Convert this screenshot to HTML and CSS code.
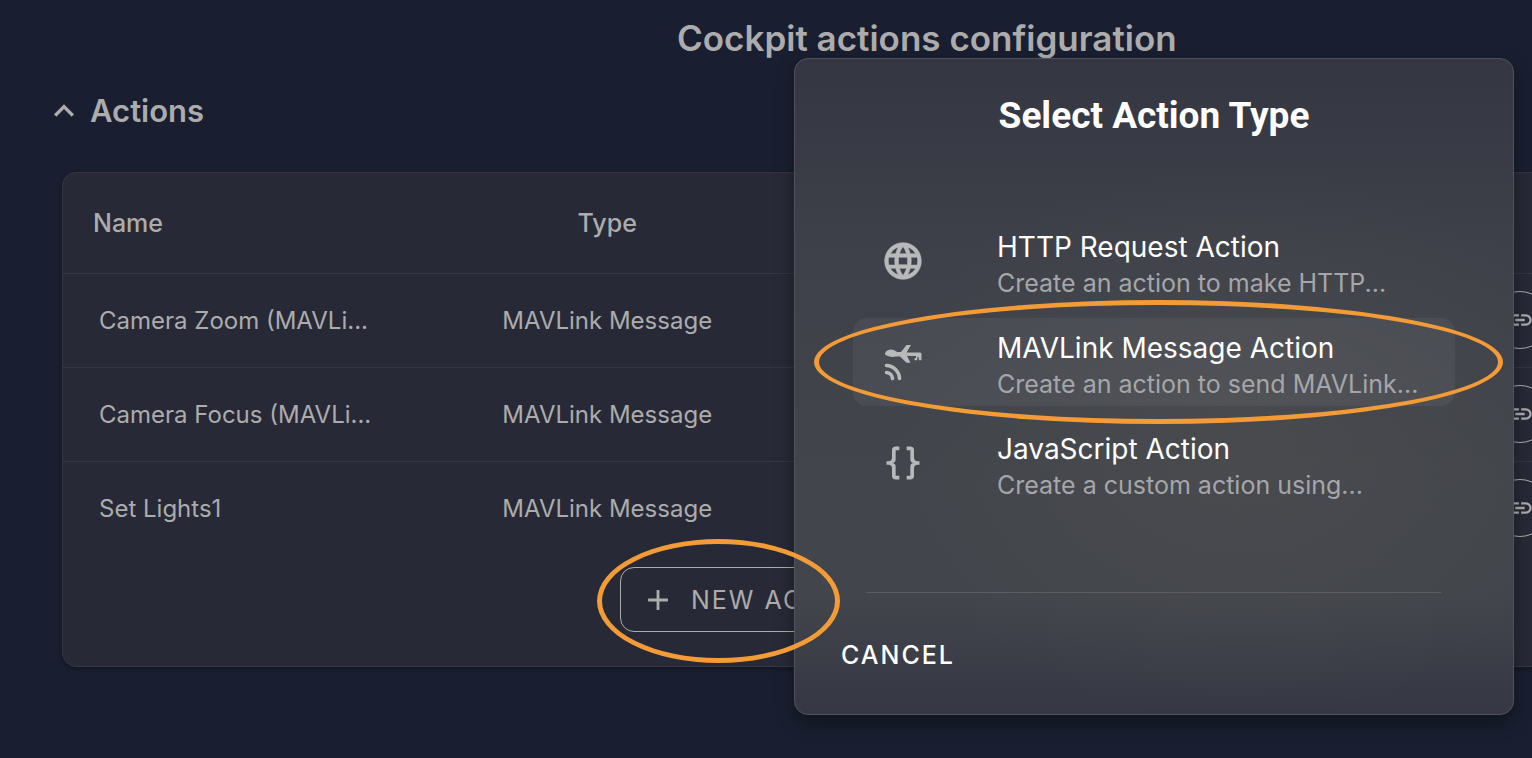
FILE: index.html
```
<!DOCTYPE html>
<html lang="en">
<head>
  <meta charset="utf-8">
  <title>Cockpit actions configuration</title>
  <link rel="stylesheet" href="styles.css">
</head>
<body>
  <svg class="sprite" aria-hidden="true">
    <symbol id="icon-link" viewBox="0 0 24 24">
      <path d="M3.9,12C3.9,10.29 5.29,8.9 7,8.9H11V7H7A5,5 0 0,0 2,12A5,5 0 0,0 7,17H11V15.1H7C5.29,15.1 3.9,13.71 3.9,12M8,13H16V11H8V13M17,7H13V8.9H17C18.71,8.9 20.1,10.29 20.1,12C20.1,13.71 18.71,15.1 17,15.1H13V17H17A5,5 0 0,0 22,12A5,5 0 0,0 17,7Z"/>
    </symbol>
  </svg>

  <main class="page">
    <h1 class="page-title">Cockpit actions configuration</h1>
    <button class="section-toggle" aria-expanded="true">
      <svg class="chevron" viewBox="0 0 24 24"><path d="M7.41,15.41L12,10.83L16.59,15.41L18,14L12,8L6,14L7.41,15.41Z"/></svg>
      Actions
    </button>
    <section class="panel">
      <table class="actions">
        <colgroup>
          <col class="col-name">
          <col class="col-type">
          <col>
        </colgroup>
        <thead>
          <tr><th>Name</th><th>Type</th><th></th></tr>
        </thead>
        <tbody>
          <tr>
            <td>Camera Zoom (MAVLi...</td>
            <td>MAVLink Message</td>
            <td><button class="round" aria-label="Link"><svg><use href="#icon-link"/></svg></button></td>
          </tr>
          <tr>
            <td>Camera Focus (MAVLi...</td>
            <td>MAVLink Message</td>
            <td><button class="round" aria-label="Link"><svg><use href="#icon-link"/></svg></button></td>
          </tr>
          <tr>
            <td>Set Lights1</td>
            <td>MAVLink Message</td>
            <td><button class="round" aria-label="Link"><svg><use href="#icon-link"/></svg></button></td>
          </tr>
        </tbody>
      </table>
      <div class="panel-footer">
        <button class="new-action">
          <svg viewBox="0 0 24 24"><path d="M19,13H13V19H11V13H5V11H11V5H13V11H19V13Z"/></svg>
          NEW ACTION
        </button>
      </div>
    </section>
  </main>

  <div class="dialog" role="dialog" aria-labelledby="dialog-title">
    <h2 class="dialog-title" id="dialog-title">Select Action Type</h2>
    <ul class="options">
      <li>
        <button class="option">
          <svg class="globe" viewBox="0 0 24 24"><path d="M16.36,14C16.44,13.34 16.5,12.68 16.5,12C16.5,11.32 16.44,10.66 16.36,10H19.74C19.9,10.64 20,11.31 20,12C20,12.69 19.9,13.36 19.74,14M14.59,19.56C15.19,18.45 15.65,17.25 15.97,16H18.92C17.96,17.65 16.43,18.93 14.59,19.56M14.34,14H9.66C9.56,13.34 9.5,12.68 9.5,12C9.5,11.32 9.56,10.65 9.66,10H14.34C14.43,10.65 14.5,11.32 14.5,12C14.5,12.68 14.43,13.34 14.34,14M12,19.96C11.17,18.76 10.5,17.43 10.09,16H13.91C13.5,17.43 12.83,18.76 12,19.96M8,8H5.08C6.03,6.34 7.57,5.06 9.4,4.44C8.8,5.55 8.35,6.75 8,8M5.08,16H8C8.35,17.25 8.8,18.45 9.4,19.56C7.57,18.93 6.03,17.65 5.08,16M4.26,14C4.1,13.36 4,12.69 4,12C4,11.31 4.1,10.64 4.26,10H7.64C7.56,10.66 7.5,11.32 7.5,12C7.5,12.68 7.56,13.34 7.64,14M12,4.03C12.83,5.23 13.5,6.57 13.91,8H10.09C10.5,6.57 11.17,5.23 12,4.03M18.92,8H15.97C15.65,6.75 15.19,5.55 14.59,4.44C16.43,5.07 17.96,6.34 18.92,8M12,2C6.47,2 2,6.5 2,12A10,10 0 0,0 12,22A10,10 0 0,0 22,12A10,10 0 0,0 12,2Z"/></svg>
          <span class="option-text">
            <span class="option-name">HTTP Request Action</span>
            <span class="option-note">Create an action to make HTTP...</span>
          </span>
        </button>
      </li>
      <li>
        <button class="option active">
          <svg viewBox="0 0 44 44">
            <path d="M4 13.500C5 10.500 7.500 9.500 10 9.500C12.500 9.500 14 10.800 16 12H20L25.500 5H30L25.500 12.500H39.200Q40.500 12.500 40.500 14V20.200H37.800V17.200H36.300V20.200H33.500V18H35V16H26L29.500 22.800H25.500L19 16.500H15C12 17.300 7 17 4 14.500Z"/>
            <g class="waves">
              <path d="M5.500 25.500A13.500 13.500 0 0 1 18.500 38.500"/>
              <path d="M5.500 32.500A6.500 6.500 0 0 1 11.500 38.500"/>
            </g>
          </svg>
          <span class="option-text">
            <span class="option-name">MAVLink Message Action</span>
            <span class="option-note">Create an action to send MAVLink...</span>
          </span>
        </button>
      </li>
      <li>
        <button class="option">
          <svg viewBox="0 0 24 24"><path d="M8,3A2,2 0 0,0 6,5V9A2,2 0 0,1 4,11H3V13H4A2,2 0 0,1 6,15V19A2,2 0 0,0 8,21H10V19H8V14A2,2 0 0,0 6,12A2,2 0 0,0 8,10V5H10V3M16,3A2,2 0 0,1 18,5V9A2,2 0 0,0 20,11H21V13H20A2,2 0 0,0 18,15V19A2,2 0 0,1 16,21H14V19H16V14A2,2 0 0,1 18,12A2,2 0 0,1 16,10V5H14V3H16Z"/></svg>
          <span class="option-text">
            <span class="option-name">JavaScript Action</span>
            <span class="option-note">Create a custom action using...</span>
          </span>
        </button>
      </li>
    </ul>
    <hr class="divider">
    <button class="cancel">CANCEL</button>
    <div class="ring ring-option"></div>
    <div class="ring ring-new"></div>
  </div>
</body>
</html>
```
FILE: styles.css
```
*{margin: 0;padding: 0;box-sizing: border-box;}
ul{list-style: none;}
html, body{
  height: 100%;
  overflow: hidden;
  background-color: #191f30;
  color: #acacac;
  font-family: Inter, sans-serif;
}
button{
  background: none;
  border: none;
  color: inherit;
  font: inherit;
  cursor: pointer;
}
svg{
  fill: currentColor;
  flex-shrink: 0;
}
.sprite{
  display: none;
}

/* page, wider than the window */
.page{
  width: 121%;
  padding: 14px 62px;
}
.page-title{
  font-size: 35px;
  font-weight: 600;
  line-height: 48px;
  text-align: center;
}
.section-toggle{
  display: flex;
  align-items: center;
  gap: 4px;
  margin: 29px 0 41px -20px;
  font-size: 31px;
  font-weight: 600;
  line-height: 40px;
}
.chevron{
  width: 44px;
  height: 40px;
}
.panel{
  background-color: #272a36;
  border: 1px solid #343741;
  border-radius: 14px;
  box-shadow: 0 2px 4px rgba(0, 0, 0, .3);
}
.actions{
  width: 100%;
  table-layout: fixed;
  border-collapse: collapse;
  font-size: 24px;
}
.col-name{
  width: 20%;
}
.col-type{
  width: 23%;
}
.actions th{
  height: 100px;
  padding-left: 30px;
  font-size: 25px;
  font-weight: 500;
  text-align: left;
}
.actions td{
  height: 94px;
  padding-left: 36px;
  border-top: 1px solid #343741;
  white-space: nowrap;
}
.actions th:nth-child(2), .actions td:nth-child(2){
  padding: 0;
  text-align: center;
}
.actions td:last-child{
  padding-right: 242px;
  text-align: right;
}
.round{
  display: inline-flex;
  align-items: center;
  justify-content: center;
  width: 58px;
  height: 58px;
  border: 1px solid #acacac;
  border-radius: 50%;
  vertical-align: middle;
}
.round svg{
  width: 28px;
  height: 28px;
}
.panel-footer{
  padding: 12px 0 34px 557px;
}
.new-action{
  display: flex;
  align-items: center;
  gap: 16px;
  height: 65px;
  padding: 0 28px 0 20px;
  border: 1px solid #acacac;
  border-radius: 14px;
  font-size: 25px;
  letter-spacing: 2px;
}
.new-action svg{
  width: 34px;
  height: 34px;
}

/* dialog */
.dialog{
  position: absolute;
  top: 58px;
  right: 18px;
  width: 720px;
  padding: 34px 46px 40px;
  border: 1px solid #50535b;
  border-radius: 14px;
  background: radial-gradient(ellipse 360px 280px at 62% 58%, rgba(84, 84, 84, .4), rgba(84, 84, 84, 0)),
    linear-gradient(#343742, #3e4149 30%, #42454b 65%, #42454b 82%, #353844);
  box-shadow: 0 8px 18px rgba(0, 0, 0, .35);
  color: #fff;
}
.dialog-title{
  font-family: Roboto, sans-serif;
  font-size: 37px;
  font-weight: 700;
  line-height: 46px;
  text-align: center;
}
.options{
  display: flex;
  flex-direction: column;
  gap: 13px;
  margin: 78px 12px 0;
}
.option{
  display: flex;
  align-items: center;
  gap: 72px;
  width: 100%;
  height: 88px;
  padding: 0 28px;
  border-radius: 14px;
  text-align: left;
}
.option.active{
  background-color: rgba(255, 255, 255, .05);
}
.option svg{
  width: 44px;
  height: 44px;
  color: #b8b9bb;
}
.globe{
  stroke: currentColor;
  stroke-width: .3;
}
.waves{
  fill: none;
  stroke: currentColor;
  stroke-width: 3.6;
  stroke-linecap: round;
}
.option-text{
  display: flex;
  flex-direction: column;
  padding-top: 8px;
  white-space: nowrap;
}
.option-name{
  font-size: 28px;
  line-height: 36px;
}
.option-note{
  color: #a5a6a9;
  font-size: 25px;
  line-height: 36px;
}
.divider{
  margin: 85px 26px 0;
  border: none;
  border-top: 1px solid #5b5d63;
}
.cancel{
  display: block;
  margin-top: 43px;
  font-size: 25px;
  font-weight: 500;
  line-height: 38px;
  letter-spacing: 2px;
}

/* highlight rings laid over the dialog */
.ring{
  position: absolute;
  height: 124px;
  border: 5px solid #f39b36;
  border-radius: 50%;
  pointer-events: none;
}
.ring-option{
  top: 241px;
  left: 19px;
  width: 689px;
}
.ring-new{
  top: 480px;
  left: -198px;
  width: 243px;
}
```
